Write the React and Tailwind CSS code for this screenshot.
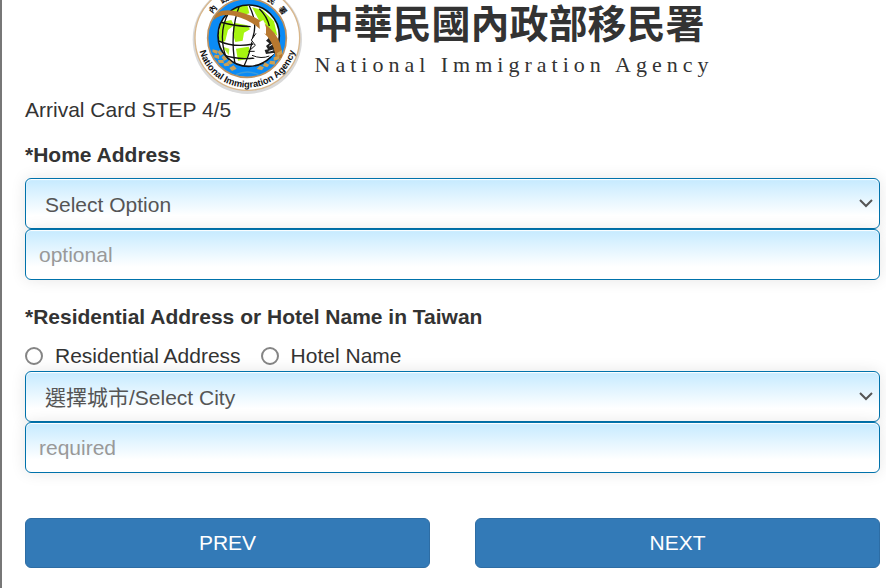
import { useState } from "react";

const FIELD =
  "block w-full h-[51px] rounded-md border border-[#0072ab] bg-linear-to-b from-[#c5eaff] to-white to-75% text-[21px] text-[#555] shadow-[0_0_15px_rgba(0,0,0,0.1),inset_0_1px_1px_#ffffff] focus:outline-none";

const RING_CHARS = [
  { char: "內", angle: -50 },
  { char: "政", angle: -31 },
  { char: "民", angle: 33 },
  { char: "署", angle: 52 },
];

function Emblem() {
  return (
    <svg viewBox="24 0 333 285" className="w-[111px] h-[95px] shrink-0" role="img" aria-label="Agency emblem">
      <defs>
        <path id="ring-text" d="M 41 114 A 149 149 0 0 0 339 114" />
        <clipPath id="globe">
          <circle cx="194" cy="107" r="92" />
        </clipPath>
      </defs>
      <circle cx="190" cy="118" r="164" fill="#d9d9d9" />
      <circle cx="190" cy="114" r="157" fill="#fff" stroke="#d8b78c" strokeWidth="4" />
      <circle cx="189" cy="114" r="118" fill="#0b8bf5" stroke="#bd9262" strokeWidth="5" />

      {/* globe */}
      <circle cx="194" cy="107" r="92" fill="#fff" />
      <g clipPath="url(#globe)">
        <path d="M102 112 L112 66 L142 60 L150 76 L132 90 L124 122 L112 130 Z" fill="#a6f510" />
        <path d="M122 42 L150 20 L190 16 L196 40 L176 46 L150 34 Z" fill="#a6f510" />
        <path d="M204 22 L236 30 L270 64 L280 108 L256 88 L226 62 Z" fill="#a6f510" />
        <path d="M150 68 L190 76 L198 88 L180 98 L176 122 L154 126 L146 100 Z" fill="#a6f510" />
        <path d="M156 146 L194 140 L198 152 L186 178 L162 182 Z" fill="#a6f510" />
        <path d="M116 140 L136 146 L134 166 Z" fill="#b8f433" />
        <g fill="none" stroke="#111" strokeWidth="4">
          <path d="M166 18 Q136 96 154 198" />
          <path d="M136 34 Q100 96 126 172" />
          <path d="M196 18 Q222 70 206 114 Q200 156 180 198" />
          <path d="M108 66 Q150 78 200 80" />
          <path d="M102 122 Q150 144 208 132" />
          <path d="M116 164 Q156 180 212 174" />
          <path d="M226 26 Q250 50 256 78" />
        </g>
      </g>
      <circle cx="194" cy="107" r="92" fill="none" stroke="#111" strokeWidth="5" />

      {/* dove */}
      <path
        d="M236 64 L244 70 L246 98 L256 118 L248 150 L272 160 Q252 180 218 182 L200 164 L214 150 L196 152 L212 136 L200 122 L218 100 L224 76 Z"
        fill="#fff"
      />
      <path d="M216 100 L202 120 L214 136 L194 154 L212 154 M204 166 Q232 178 256 168" fill="none" stroke="#111" strokeWidth="3" />
      <path d="M250 104 L262 118 L272 138 L272 158 L246 162 L242 150 L252 148 L246 138 L256 130 L246 122 L254 114 Z" fill="#222" />
      <path d="M256 138 L266 132 M254 154 L268 150" fill="none" stroke="#fff" strokeWidth="3" />

      {/* orbit */}
      <path
        d="M90 60 Q94 26 146 32 Q222 42 272 100 Q296 134 294 172 L274 182 Q276 144 252 112 Q212 62 150 47 Q108 40 90 60 Z"
        fill="#b8782f"
      />
      <path d="M226 66 L238 60 L246 82 L246 102 L228 96 Z" fill="#fff" />

      {/* wheat ears */}
      <g fill="#cda052">
        <path d="M86 148 l16 4 l-3 10 l-14 -6z M92 164 l14 2 l-1 11 l-15 -5z M102 180 l16 0 l2 10 l-16 -2z M118 192 l14 -6 l4 11 l-14 2z M136 204 l13 -8 l9 10 l-14 7z" />
        <path d="M106 150 l12 12 l-9 5 l-8 -10z M120 166 l10 12 l-10 4 l-7 -10z M136 180 l11 10 l-10 4 l-7 -8z" />
        <path d="M294 150 l-16 10 l3 9 l14 -8z M286 168 l-17 4 l0 10 l16 -4z M274 184 l-16 -2 l-2 10 l16 2z M256 194 l-14 -7 l-5 10 l13 5z M240 202 l-13 -5 l-9 10 l16 4z" />
      </g>
      <path d="M156 224 Q190 208 224 224" fill="none" stroke="#3f9bd8" strokeWidth="4" />

      {RING_CHARS.map(({ char, angle }) => (
        <text
          key={char}
          x="190"
          y="-12"
          textAnchor="middle"
          transform={`rotate(${angle} 190 114)`}
          className="font-['Noto_Sans_CJK_TC',sans-serif] text-[24px] font-bold"
          fill="#111"
        >
          {char}
        </text>
      ))}
      <text className="font-['Liberation_Sans',sans-serif] text-[28px] font-bold" fill="#111">
        <textPath href="#ring-text" startOffset="50%" textAnchor="middle">
          National Immigration Agency
        </textPath>
      </text>
    </svg>
  );
}

function SelectField({ label, placeholder, options }) {
  return (
    <div className="relative">
      <select
        aria-label={label}
        defaultValue=""
        className={`${FIELD} appearance-none pl-[19px] pr-10 pt-[3px] font-['Liberation_Sans','Noto_Sans_CJK_TC',sans-serif]`}
      >
        <option value="">{placeholder}</option>
        {options.map((option) => (
          <option key={option} value={option}>
            {option}
          </option>
        ))}
      </select>
      <svg
        viewBox="0 0 14 10"
        className="absolute right-[7px] top-5 w-3.5 h-2.5 pointer-events-none"
        fill="none"
        stroke="#555"
        strokeWidth="2"
      >
        <path d="M1 2 L7 8 L13 2" />
      </svg>
    </div>
  );
}

export default function App() {
  const [home, setHome] = useState("");
  const [address, setAddress] = useState("");
  const [stayType, setStayType] = useState("");

  return (
    <main className="min-h-screen border-l-2 border-[#777] bg-white pl-[23px] pr-1.5 font-['Liberation_Sans','Noto_Sans_CJK_TC',sans-serif] text-[21px] leading-[30px] text-[#333]">
      <header className="flex items-start justify-center gap-3">
        <Emblem />
        <div className="whitespace-nowrap">
          <div className="font-['Noto_Sans_CJK_TC',sans-serif] text-[39px] leading-[42px] font-bold">中華民國內政部移民署</div>
          <div className="mt-2 font-['Liberation_Serif',serif] text-[22px] tracking-[5px]">National Immigration Agency</div>
        </div>
      </header>

      <form onSubmit={(e) => e.preventDefault()}>
        <p>Arrival Card STEP 4/5</p>

        <label htmlFor="home" className="block mt-[15px] mb-2 font-bold">
          *Home Address
        </label>
        <SelectField label="Home country" placeholder="Select Option" options={["Japan", "Korea", "Singapore"]} />
        <input
          id="home"
          type="text"
          value={home}
          onChange={(e) => setHome(e.target.value)}
          placeholder="optional"
          className={`${FIELD} relative px-[13px] placeholder:text-[#999]`}
        />

        <fieldset className="mt-[22px]">
          <legend className="font-bold">*Residential Address or Hotel Name in Taiwan</legend>
          <div className="flex gap-5 pt-[9px]">
            {["Residential Address", "Hotel Name"].map((type) => (
              <label key={type} className="flex items-center gap-3">
                <input
                  type="radio"
                  name="stayType"
                  value={type}
                  checked={stayType === type}
                  onChange={() => setStayType(type)}
                  className="size-[18px] appearance-none rounded-full border-2 border-[#858585] bg-white checked:border-[5px] checked:border-[#0075ff]"
                />
                {type}
              </label>
            ))}
          </div>
          <SelectField label="City" placeholder="選擇城市/Select City" options={["臺北市/Taipei City", "高雄市/Kaohsiung City"]} />
          <input
            type="text"
            aria-label="Address in Taiwan"
            value={address}
            onChange={(e) => setAddress(e.target.value)}
            placeholder="required"
            className={`${FIELD} relative px-[13px] placeholder:text-[#999]`}
          />
        </fieldset>

        <div className="mt-[45px] grid grid-cols-2 gap-[45px] pb-5">
          <button type="button" className="h-[50px] rounded-md border border-[#2e6da4] bg-[#337ab7] text-white">
            PREV
          </button>
          <button type="submit" className="h-[50px] rounded-md border border-[#2e6da4] bg-[#337ab7] text-white">
            NEXT
          </button>
        </div>
      </form>
    </main>
  );
}
